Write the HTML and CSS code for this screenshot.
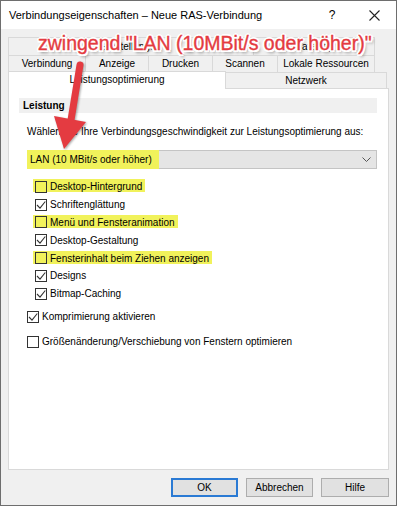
FILE: index.html
```html
<!DOCTYPE html>
<html lang="de">
<head>
<meta charset="utf-8">
<title>Verbindungseigenschaften</title>
<link rel="stylesheet" href="styles.css">
</head>
<body>
<div class="window">
  <div class="titlebar">
    <span class="title">Verbindungseigenschaften – Neue RAS-Verbindung</span>
    <span class="tb-help">?</span>
    <span class="tb-close"><svg width="11" height="11" viewBox="0 0 11 11"><path d="M0.5 0.5 L10.5 10.5 M10.5 0.5 L0.5 10.5" stroke="#222" stroke-width="1.1" fill="none"/></svg></span>
  </div>
  <div class="body">
    <div class="tabs">
      <div class="tabrow row1">
        <div class="tab">Einstellungen</div>
        <div class="tab">Gateway</div>
      </div>
      <div class="tabrow row2">
        <div class="tab">Verbindung</div>
        <div class="tab">Anzeige</div>
        <div class="tab">Drucken</div>
        <div class="tab">Scannen</div>
        <div class="tab">Lokale Ressourcen</div>
      </div>
      <div class="tabrow row3">
        <div class="tab selected">Leistungsoptimierung</div>
        <div class="tab">Netzwerk</div>
      </div>
    </div>
    <div class="panel">
      <div class="group-head">Leistung</div>
      <div class="content">
        <div class="prompt">Wählen Sie Ihre Verbindungsgeschwindigkeit zur Leistungsoptimierung aus:</div>
        <div class="combo">
          <span class="combo-text hl">LAN (10 MBit/s oder höher)</span>
          <svg class="chev" width="9" height="5" viewBox="0 0 9 5"><path d="M0.5 0.5 L4.5 4.5 L8.5 0.5" stroke="#555" stroke-width="1" fill="none"/></svg>
        </div>
        <div class="checklist">
          <div class="row"><span class="item hl"><span class="box"></span><span>Desktop-Hintergrund</span></span></div>
          <div class="row"><span class="item"><span class="box checked"><svg width="10" height="10" viewBox="0 0 10 10"><path d="M1 5 L4 8.2 L9.3 1.5" stroke="#333" stroke-width="1.1" fill="none"/></svg></span><span>Schriftenglättung</span></span></div>
          <div class="row"><span class="item hl"><span class="box"></span><span>Menü und Fensteranimation</span></span></div>
          <div class="row"><span class="item"><span class="box checked"><svg width="10" height="10" viewBox="0 0 10 10"><path d="M1 5 L4 8.2 L9.3 1.5" stroke="#333" stroke-width="1.1" fill="none"/></svg></span><span>Desktop-Gestaltung</span></span></div>
          <div class="row"><span class="item hl"><span class="box"></span><span>Fensterinhalt beim Ziehen anzeigen</span></span></div>
          <div class="row"><span class="item"><span class="box checked"><svg width="10" height="10" viewBox="0 0 10 10"><path d="M1 5 L4 8.2 L9.3 1.5" stroke="#333" stroke-width="1.1" fill="none"/></svg></span><span>Designs</span></span></div>
          <div class="row"><span class="item"><span class="box checked"><svg width="10" height="10" viewBox="0 0 10 10"><path d="M1 5 L4 8.2 L9.3 1.5" stroke="#333" stroke-width="1.1" fill="none"/></svg></span><span>Bitmap-Caching</span></span></div>
        </div>
        <div class="option first"><span class="box checked"><svg width="10" height="10" viewBox="0 0 10 10"><path d="M1 5 L4 8.2 L9.3 1.5" stroke="#333" stroke-width="1.1" fill="none"/></svg></span><span>Komprimierung aktivieren</span></div>
        <div class="option"><span class="box"></span><span>Größenänderung/Verschiebung von Fenstern optimieren</span></div>
      </div>
    </div>
    <div class="buttons">
      <button class="btn default">OK</button>
      <button class="btn">Abbrechen</button>
      <button class="btn">Hilfe</button>
    </div>
  </div>
  <div class="annotation">zwingend "LAN (10MBit/s oder höher)"</div>
  <svg class="arrow" width="70" height="100" viewBox="0 0 70 100">
    <path d="M49 9 L40 64" stroke="#e43b41" stroke-width="7" stroke-linecap="round" fill="none"/>
    <polygon points="33,93 23,60 55,66" fill="#e43b41"/>
  </svg>
</div>
</body>
</html>
```

FILE: styles.css
```css
html, body {
  margin: 0;
  padding: 0;
}
body {
  font-family: "Liberation Sans", Arial, sans-serif;
  font-size: 10px;
  color: #000;
  background: #f0f0f0;
}
.window {
  position: relative;
  width: 397px;
  height: 506px;
  box-sizing: border-box;
  border: 1px solid #6e6e6e;
  background: #f0f0f0;
  display: flex;
  flex-direction: column;
  overflow: hidden;
}
.titlebar {
  height: 28px;
  flex: 0 0 28px;
  background: #fff;
  display: flex;
  align-items: center;
  padding-left: 8px;
}
.title {
  font-size: 11px;
  flex: 1;
  color: #000;
}
.tb-help {
  font-size: 12px;
  width: 12px;
  text-align: center;
  margin-right: 31px;
}
.tb-close {
  display: flex;
  margin-right: 16px;
}
.body {
  flex: 1;
  display: flex;
  flex-direction: column;
  padding: 8px 7px 0 7px;
}
.tabs {
  display: flex;
  flex-direction: column;
}
.tabrow {
  display: grid;
}
.tab {
  box-sizing: border-box;
  border: 1px solid #d9d9d9;
  border-bottom: none;
  display: flex;
  align-items: center;
  justify-content: center;
  background: #f0f0f0;
  white-space: nowrap;
  overflow: hidden;
}
.tab + .tab {
  border-left: none;
}
.row1 {
  height: 18px;
  width: 367px;
  grid-template-columns: 246px 121px;
}
.row2 {
  height: 17px;
  width: 367px;
  grid-template-columns: 78px 63px 64px 65px 97px;
}
.row2 .tab {
  padding-bottom: 1px;
}
.row3 {
  height: 16px;
  grid-template-columns: 218px 161px;
  align-items: end;
}
.row3 .tab {
  height: 16px;
}
.row3 .tab.selected {
  height: 18px;
  margin-top: -2px;
  background: #fff;
  position: relative;
  z-index: 1;
  margin-bottom: -1px;
  padding-bottom: 2px;
}
.panel {
  flex: 1;
  background: #fff;
  border: 1px solid #d9d9d9;
  display: flex;
  flex-direction: column;
}
.group-head {
  margin: 9px 11px 0 10px;
  height: 15px;
  background: #f0f0f0;
  font-weight: bold;
  display: flex;
  align-items: center;
  padding-left: 4px;
}
.content {
  padding-left: 18px;
  padding-right: 11px;
  display: flex;
  flex-direction: column;
}
.prompt {
  margin-top: 12px;
  height: 14px;
  line-height: 14px;
  white-space: nowrap;
}
.combo {
  margin-top: 11px;
  height: 19px;
  box-sizing: border-box;
  border: 1px solid #c4c4c4;
  background: #e5e5e5;
  display: flex;
  align-items: stretch;
  justify-content: space-between;
}
.combo-text {
  display: flex;
  align-items: center;
  box-sizing: border-box;
  padding: 0 0 0 3px;
  margin: -1px 0 -1px -1px;
  width: 132px;
  white-space: nowrap;
}
.chev {
  align-self: center;
  margin-right: 5px;
}
.hl {
  background: #f1f25b;
}
.checklist {
  margin-top: 9px;
  padding-left: 6px;
  display: flex;
  flex-direction: column;
}
.row {
  height: 17.8px;
  display: flex;
  align-items: center;
}
.item {
  display: inline-flex;
  align-items: center;
  height: 12px;
  padding: 0 3px 0 2px;
  gap: 3px;
  white-space: nowrap;
}
.item.hl {
  margin-top: -2px;
  height: 13px;
}
.item.hl .box {
  margin-top: 2px;
}
.item.hl > span:last-child {
  margin-top: 2px;
}
.box {
  box-sizing: border-box;
  width: 12px;
  height: 12px;
  border: 1px solid #333;
  background: transparent;
  display: inline-flex;
  align-items: center;
  justify-content: center;
  flex: 0 0 12px;
}
.option {
  display: flex;
  align-items: center;
  gap: 3px;
  height: 14px;
  margin-top: 11px;
  white-space: nowrap;
}
.option.first {
  margin-top: 7px;
}
.buttons {
  display: flex;
  justify-content: flex-end;
  gap: 8px;
  padding: 8px 0 8px 0;
}
.btn {
  width: 67px;
  height: 19px;
  box-sizing: border-box;
  border: 1px solid #adadad;
  background: #e1e1e1;
  font-family: "Liberation Sans", Arial, sans-serif;
  font-size: 10px;
  color: #000;
  padding: 0;
  margin: 0;
}
.btn:last-child {
  width: 68px;
}
.btn.default {
  border: 2px solid #2a7ad4;
}
.annotation {
  position: absolute;
  left: 37px;
  top: 31px;
  font-family: "Liberation Sans", Arial, sans-serif;
  font-size: 19.5px;
  color: #e43b41;
  -webkit-text-stroke: 0.35px #e43b41;
  white-space: nowrap;
  text-shadow:
    2px 0 0 #fff, -2px 0 0 #fff, 0 2px 0 #fff, 0 -2px 0 #fff,
    1.5px 1.5px 0 #fff, -1.5px -1.5px 0 #fff, 1.5px -1.5px 0 #fff, -1.5px 1.5px 0 #fff,
    2px 3px 3px rgba(0,0,0,0.45);
  z-index: 5;
}
.arrow {
  position: absolute;
  left: 30px;
  top: 55px;
  z-index: 4;
  filter: drop-shadow(1px 1px 1px rgba(0,0,0,0.35));
}
```
